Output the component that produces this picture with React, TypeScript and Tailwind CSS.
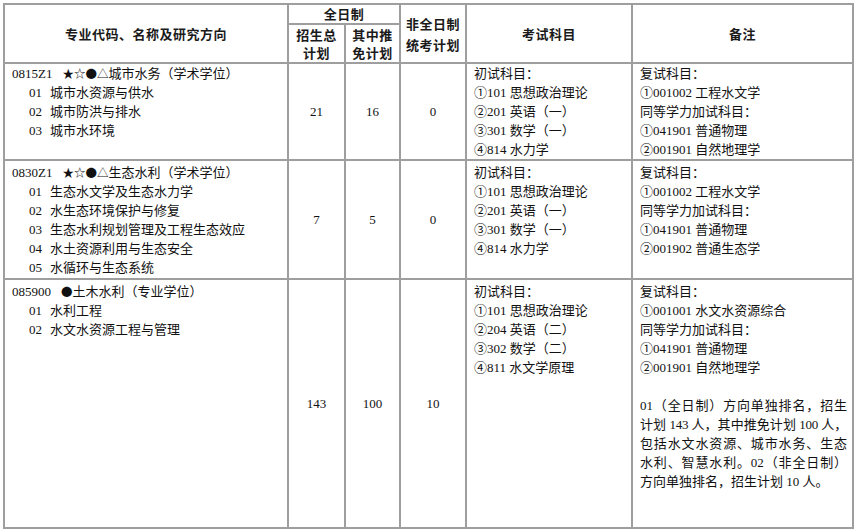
import React from "react";

const serif = "font-['Liberation_Serif','Noto_Sans_CJK_SC',serif]";
const cell = "border-2 border-[#9e9e9e]";
const hd = "font-['Noto_Sans_CJK_SC',sans-serif] font-bold text-[13px] tracking-[0.5px] text-[#1a1a1a] text-center align-middle";
const ln = "h-[19px] leading-[19px] whitespace-nowrap overflow-visible";

function Dir({ n, t }: { n: string; t: string }) {
  return (
    <div className={`flex pl-[17px] ${ln}`}>
      <span>{n}</span>
      <span className="ml-[8px]">{t}</span>
    </div>
  );
}

function Head({ code, sym, name }: { code: string; sym: string; name: string }) {
  return (
    <div className={`flex items-center ${ln}`}>
      <span>{code}</span>
      <span className="ml-[10px] text-[11.5px] font-['Noto_Sans_CJK_SC',sans-serif]">{sym}</span>
      <span>{name}</span>
    </div>
  );
}

function Lines({ items }: { items: string[] }) {
  return (
    <>
      {items.map((s, i) => (
        <div key={i} className={ln}>
          {s}
        </div>
      ))}
    </>
  );
}

const jl = `${ln} text-justify [text-align-last:justify]`;

export default function App() {
  return (
    <div className="w-[854px] h-[531px] bg-white pl-[3px] pt-[3px]">
      <table className={`table-fixed border-collapse w-[849px] text-[13px] leading-[19px] text-[#111] ${serif}`}>
        <colgroup>
          <col className="w-[284px]" />
          <col className="w-[57px]" />
          <col className="w-[55px]" />
          <col className="w-[66px]" />
          <col className="w-[166px]" />
          <col className="w-[221px]" />
        </colgroup>
        <thead>
          <tr className="h-[20px]">
            <th rowSpan={2} className={`${cell} ${hd}`}>专业代码、名称及研究方向</th>
            <th colSpan={2} className={`${cell} ${hd} leading-[16px]`}>全日制</th>
            <th rowSpan={2} className={`${cell} ${hd} leading-[21px]`}>
              <div>非全日制</div>
              <div>统考计划</div>
            </th>
            <th rowSpan={2} className={`${cell} ${hd}`}>考试科目</th>
            <th rowSpan={2} className={`${cell} ${hd}`}>备注</th>
          </tr>
          <tr className="h-[39px]">
            <th className={`${cell} ${hd} leading-[18px]`}>
              <div>招生总</div>
              <div>计划</div>
            </th>
            <th className={`${cell} ${hd} leading-[18px]`}>
              <div>其中推</div>
              <div>免计划</div>
            </th>
          </tr>
        </thead>
        <tbody>
          <tr className="h-[97px]">
            <td className={`${cell} align-top pt-0 px-[7px]`}>
              <Head code="0815Z1" sym="★☆●△" name="城市水务（学术学位）" />
              <Dir n="01" t="城市水资源与供水" />
              <Dir n="02" t="城市防洪与排水" />
              <Dir n="03" t="城市水环境" />
            </td>
            <td className={`${cell} text-center align-middle`}>21</td>
            <td className={`${cell} text-center align-middle`}>16</td>
            <td className={`${cell} text-center align-middle`}>0</td>
            <td className={`${cell} align-top pt-0 px-[7px]`}>
              <Lines items={["初试科目：", "①101 思想政治理论", "②201 英语（一）", "③301 数学（一）", "④814 水力学"]} />
            </td>
            <td className={`${cell} align-top pt-0 px-[7px]`}>
              <Lines items={["复试科目：", "①001002 工程水文学", "同等学力加试科目：", "①041901 普通物理", "②001901 自然地理学"]} />
            </td>
          </tr>
          <tr className="h-[119px]">
            <td className={`${cell} align-top pt-[2px] px-[7px]`}>
              <Head code="0830Z1" sym="★☆●△" name="生态水利（学术学位）" />
              <Dir n="01" t="生态水文学及生态水力学" />
              <Dir n="02" t="水生态环境保护与修复" />
              <Dir n="03" t="生态水利规划管理及工程生态效应" />
              <Dir n="04" t="水土资源利用与生态安全" />
              <Dir n="05" t="水循环与生态系统" />
            </td>
            <td className={`${cell} text-center align-middle`}>7</td>
            <td className={`${cell} text-center align-middle`}>5</td>
            <td className={`${cell} text-center align-middle`}>0</td>
            <td className={`${cell} align-top pt-[2px] px-[7px]`}>
              <Lines items={["初试科目：", "①101 思想政治理论", "②201 英语（一）", "③301 数学（一）", "④814 水力学"]} />
            </td>
            <td className={`${cell} align-top pt-[2px] px-[7px]`}>
              <Lines items={["复试科目：", "①001002 工程水文学", "同等学力加试科目：", "①041901 普通物理", "②001902 普通生态学"]} />
            </td>
          </tr>
          <tr className="h-[249px]">
            <td className={`${cell} align-top pt-[2px] px-[7px]`}>
              <Head code="085900" sym="●" name="土木水利（专业学位）" />
              <Dir n="01" t="水利工程" />
              <Dir n="02" t="水文水资源工程与管理" />
            </td>
            <td className={`${cell} text-center align-middle`}>143</td>
            <td className={`${cell} text-center align-middle`}>100</td>
            <td className={`${cell} text-center align-middle`}>10</td>
            <td className={`${cell} align-top pt-[2px] px-[7px]`}>
              <Lines items={["初试科目：", "①101 思想政治理论", "②204 英语（二）", "③302 数学（二）", "④811 水文学原理"]} />
            </td>
            <td className={`${cell} align-top pt-[2px] pl-[7px] pr-[5px]`}>
              <Lines items={["复试科目：", "①001001 水文水资源综合", "同等学力加试科目：", "①041901 普通物理", "②001901 自然地理学"]} />
              <div className="h-[19px]" />
              <div className={jl}>01（全日制）方向单独排名，招生</div>
              <div className={`${jl} tracking-[-0.3px]`}>计划 143 人，其中推免计划 100 人，</div>
              <div className={jl}>包括水文水资源、城市水务、生态</div>
              <div className={jl}>水利、智慧水利。02（非全日制）</div>
              <div className={ln}>方向单独排名，招生计划 10 人。</div>
            </td>
          </tr>
        </tbody>
      </table>
    </div>
  );
}
